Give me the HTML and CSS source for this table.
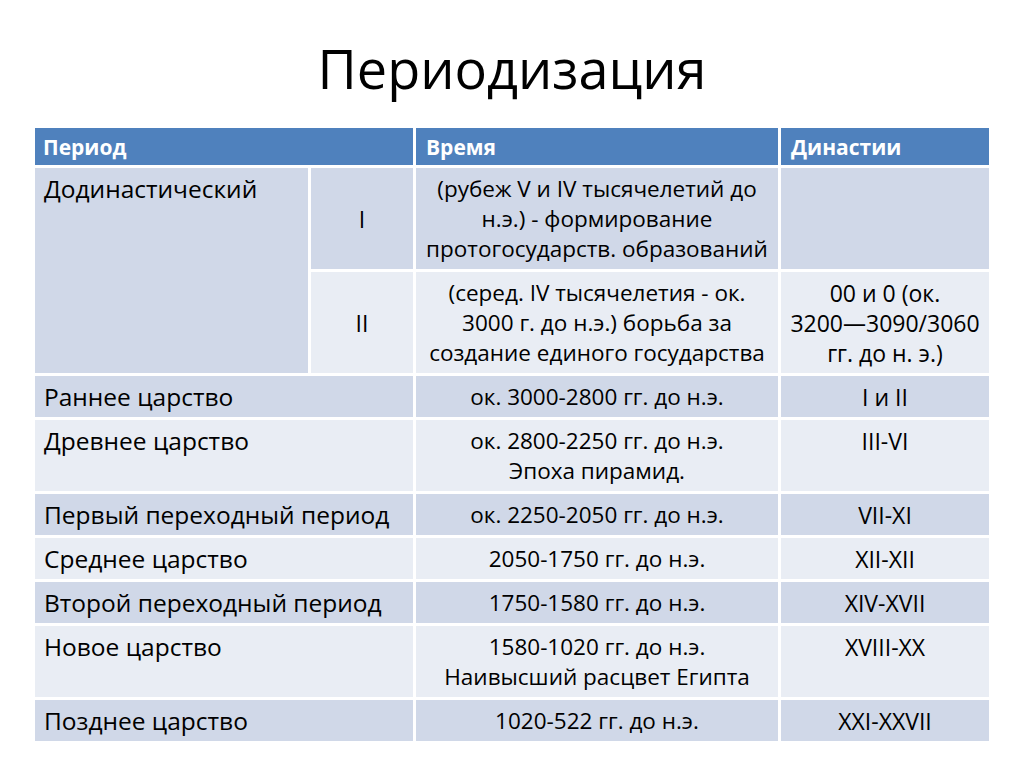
FILE: index.html
```html
<!DOCTYPE html>
<html lang="ru">
<head>
<meta charset="utf-8">
<title>Периодизация</title>
<link rel="stylesheet" href="styles.css">
</head>
<body>
<div class="slide">
  <h1 class="title">Периодизация</h1>
  <table class="grid">
    <colgroup>
      <col class="c1a"><col class="c1b"><col class="c2"><col class="c3">
    </colgroup>
    <thead>
      <tr>
        <th colspan="2" class="h1">Период</th>
        <th>Время</th>
        <th>Династии</th>
      </tr>
    </thead>
    <tbody>
      <tr class="dark">
        <td rowspan="2" class="name">Додинастический</td>
        <td class="sub">I</td>
        <td class="mid">(рубеж V и IV тысячелетий до<br>н.э.) - формирование<br>протогосударств. образований</td>
        <td class="dyn"></td>
      </tr>
      <tr class="light">
        <td class="sub">II</td>
        <td class="mid">(серед. IV тысячелетия - ок.<br>3000 г. до н.э.) борьба за<br>создание единого государства</td>
        <td class="dyn">00 и 0 (ок.<br>3200—3090/3060<br>гг. до н. э.)</td>
      </tr>
      <tr class="dark">
        <td colspan="2" class="name">Раннее царство</td>
        <td class="mid">ок. 3000-2800 гг. до н.э.</td>
        <td class="dyn">I и II</td>
      </tr>
      <tr class="light">
        <td colspan="2" class="name">Древнее царство</td>
        <td class="mid">ок. 2800-2250 гг. до н.э.<br>Эпоха пирамид.</td>
        <td class="dyn">III-VI</td>
      </tr>
      <tr class="dark">
        <td colspan="2" class="name">Первый переходный период</td>
        <td class="mid">ок. 2250-2050 гг. до н.э.</td>
        <td class="dyn">VII-XI</td>
      </tr>
      <tr class="light">
        <td colspan="2" class="name">Среднее царство</td>
        <td class="mid">2050-1750 гг. до н.э.</td>
        <td class="dyn">XII-XII</td>
      </tr>
      <tr class="dark">
        <td colspan="2" class="name">Второй переходный период</td>
        <td class="mid">1750-1580 гг. до н.э.</td>
        <td class="dyn">XIV-XVII</td>
      </tr>
      <tr class="light">
        <td colspan="2" class="name">Новое царство</td>
        <td class="mid">1580-1020 гг. до н.э.<br>Наивысший расцвет Египта</td>
        <td class="dyn">XVIII-XX</td>
      </tr>
      <tr class="dark">
        <td colspan="2" class="name">Позднее царство</td>
        <td class="mid">1020-522 гг. до н.э.</td>
        <td class="dyn">XXI-XXVII</td>
      </tr>
    </tbody>
  </table>
</div>
</body>
</html>
```

FILE: styles.css
```css
html, body {
  margin: 0;
  padding: 0;
  background: #ffffff;
}
body {
  font-family: "Open Sans", "Noto Sans", sans-serif;
  color: #000;
}
.slide {
  width: 1024px;
  height: 767px;
  display: flex;
  flex-direction: column;
  align-items: center;
}
.title {
  margin: 0;
  height: 125px;
  display: flex;
  align-items: center;
  font-size: 54px;
  font-weight: 400;
  line-height: 1;
  padding-top: 10px;
  box-sizing: border-box;
}
.grid {
  table-layout: fixed;
  border-collapse: separate;
  border-spacing: 3px;
  width: 960px;
}
.c1a { width: 273px; }
.c1b { width: 102px; }
.c2 { width: 362px; }
.c3 { width: 208px; }
th {
  background: #4f81bd;
  color: #fff;
  font-weight: 700;
  font-size: 21px;
  text-align: left;
  height: 37px;
  padding: 0 10px;
  box-sizing: border-box;
}
th.h1 { padding-left: 8px; }
td {
  font-size: 22.5px;
  line-height: 30px;
  padding: 6px 4px 5px;
  vertical-align: top;
}
.dark td { background: #d0d8e8; }
.light td { background: #e9edf4; }
td.name {
  background: #d0d8e8;
  font-size: 24.5px;
  padding-left: 9px;
}
.light td.name { background: #e9edf4; }
td.sub {
  text-align: center;
  vertical-align: middle;
  font-size: 23px;
}
td.mid {
  text-align: center;
}
td.dyn {
  text-align: center;
  font-size: 23px;
}
```
